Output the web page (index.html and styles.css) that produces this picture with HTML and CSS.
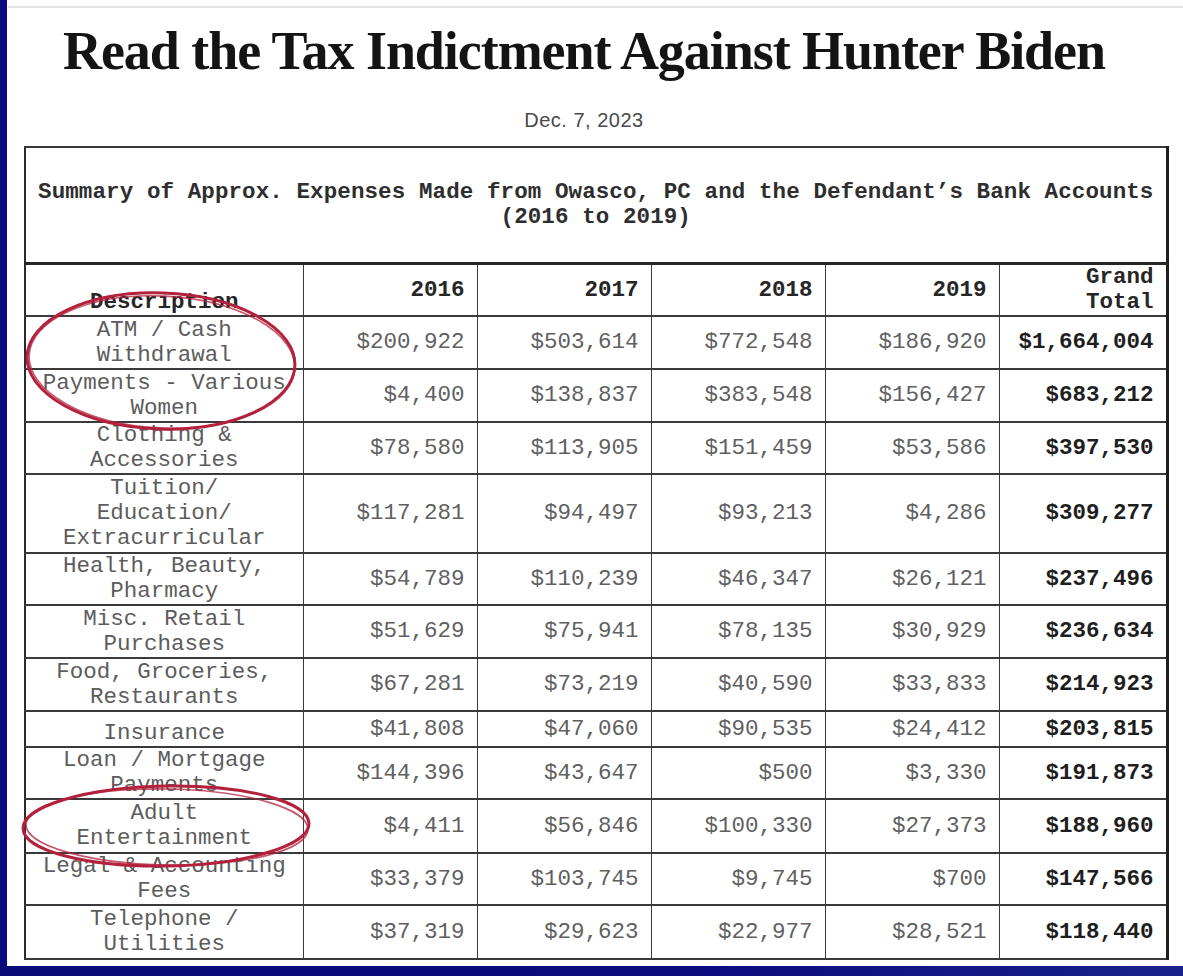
FILE: index.html
```html
<!DOCTYPE html>
<html lang="en">
<head>
<meta charset="utf-8">
<title>Read the Tax Indictment Against Hunter Biden</title>
<link rel="stylesheet" href="styles.css">
</head>
<body>
<div class="screen">
  <main class="page">
    <div class="rule"></div>
    <h1 class="headline">Read the Tax Indictment Against Hunter Biden</h1>
    <p class="dateline">Dec. 7, 2023</p>
    <div class="doc">
      <table class="expenses">
        <colgroup>
          <col class="c-desc"><col class="c-year"><col class="c-year"><col class="c-year"><col class="c-year"><col class="c-total">
        </colgroup>
        <tr class="r-title">
          <th colspan="6" class="title-cell">Summary of Approx. Expenses Made from Owasco, PC and the Defendant’s Bank Accounts<br>(2016 to 2019)</th>
        </tr>
        <tr class="r-head">
          <th class="h-desc">Description</th>
          <th class="h-num">2016</th>
          <th class="h-num">2017</th>
          <th class="h-num">2018</th>
          <th class="h-num">2019</th>
          <th class="h-num">Grand<br>Total</th>
        </tr>
        <tr class="r2a">
          <td class="desc">ATM / Cash<br>Withdrawal</td>
          <td class="num">$200,922</td><td class="num">$503,614</td><td class="num">$772,548</td><td class="num">$186,920</td><td class="tot">$1,664,004</td>
        </tr>
        <tr class="r2a">
          <td class="desc">Payments - Various<br>Women</td>
          <td class="num">$4,400</td><td class="num">$138,837</td><td class="num">$383,548</td><td class="num">$156,427</td><td class="tot">$683,212</td>
        </tr>
        <tr class="r2b">
          <td class="desc">Clothing &amp;<br>Accessories</td>
          <td class="num">$78,580</td><td class="num">$113,905</td><td class="num">$151,459</td><td class="num">$53,586</td><td class="tot">$397,530</td>
        </tr>
        <tr class="r3">
          <td class="desc">Tuition/<br>Education/<br>Extracurricular</td>
          <td class="num">$117,281</td><td class="num">$94,497</td><td class="num">$93,213</td><td class="num">$4,286</td><td class="tot">$309,277</td>
        </tr>
        <tr class="r2b">
          <td class="desc">Health, Beauty,<br>Pharmacy</td>
          <td class="num">$54,789</td><td class="num">$110,239</td><td class="num">$46,347</td><td class="num">$26,121</td><td class="tot">$237,496</td>
        </tr>
        <tr class="r2a">
          <td class="desc">Misc. Retail<br>Purchases</td>
          <td class="num">$51,629</td><td class="num">$75,941</td><td class="num">$78,135</td><td class="num">$30,929</td><td class="tot">$236,634</td>
        </tr>
        <tr class="r2a">
          <td class="desc">Food, Groceries,<br>Restaurants</td>
          <td class="num">$67,281</td><td class="num">$73,219</td><td class="num">$40,590</td><td class="num">$33,833</td><td class="tot">$214,923</td>
        </tr>
        <tr class="r1">
          <td class="desc desc-low">Insurance</td>
          <td class="num">$41,808</td><td class="num">$47,060</td><td class="num">$90,535</td><td class="num">$24,412</td><td class="tot">$203,815</td>
        </tr>
        <tr class="r2b">
          <td class="desc">Loan / Mortgage<br>Payments</td>
          <td class="num">$144,396</td><td class="num">$43,647</td><td class="num">$500</td><td class="num">$3,330</td><td class="tot">$191,873</td>
        </tr>
        <tr class="r2c">
          <td class="desc">Adult<br>Entertainment</td>
          <td class="num">$4,411</td><td class="num">$56,846</td><td class="num">$100,330</td><td class="num">$27,373</td><td class="tot">$188,960</td>
        </tr>
        <tr class="r2b">
          <td class="desc">Legal &amp; Accounting<br>Fees</td>
          <td class="num">$33,379</td><td class="num">$103,745</td><td class="num">$9,745</td><td class="num">$700</td><td class="tot">$147,566</td>
        </tr>
        <tr class="r2c">
          <td class="desc">Telephone /<br>Utilities</td>
          <td class="num">$37,319</td><td class="num">$29,623</td><td class="num">$22,977</td><td class="num">$28,521</td><td class="tot">$118,440</td>
        </tr>
      </table>
      <svg class="marks" width="1142" height="812" viewBox="0 0 1142 812" aria-hidden="true">
        <g fill="none" stroke="#b3223c" stroke-linecap="round">
          <ellipse cx="137" cy="215" rx="134" ry="68" stroke-width="3" transform="rotate(2 137 215)"/>
          <ellipse cx="138" cy="216" rx="133" ry="66" stroke-width="1.6" stroke-opacity="0.75" transform="rotate(3 138 216)"/>
          <ellipse cx="142" cy="680" rx="143" ry="40" stroke-width="3" transform="rotate(-1 142 680)"/>
          <ellipse cx="143" cy="681" rx="141" ry="38" stroke-width="1.6" stroke-opacity="0.75" transform="rotate(1 143 681)"/>
        </g>
      </svg>
    </div>
  </main>
  <div class="bottom-bar"></div>
</div>
</body>
</html>
```
FILE: styles.css
```css
html, body {
  margin: 0;
  padding: 0;
  background: #ffffff;
}

.screen {
  width: 1183px;
  height: 976px;
  overflow: hidden;
  display: flex;
  flex-direction: column;
}

.page {
  height: 966px;
  flex: none;
  box-sizing: border-box;
  border-left: 7px solid #0b0b80;
  padding-top: 6px;
  overflow: hidden;
  background: #fff;
}

.bottom-bar {
  height: 10px;
  flex: none;
  background: linear-gradient(90deg, #0a0a78 0%, #0c0c80 60%, #17238a 100%);
}

.rule {
  height: 2px;
  margin-left: 1px;
  background: #e4e4e4;
}

.headline {
  margin: 13px 0 0;
  padding-right: 22px;
  text-align: center;
  font-family: "Liberation Serif", "Times New Roman", serif;
  font-weight: bold;
  font-size: 54px;
  line-height: 60px;
  letter-spacing: -1.05px;
  color: #141414;
}

.dateline {
  margin: 27px 0 0;
  padding-right: 22px;
  text-align: center;
  font-family: "Liberation Sans", Arial, sans-serif;
  font-size: 20px;
  line-height: 24px;
  letter-spacing: 0.5px;
  color: #4a4a4a;
}

.doc {
  position: relative;
  margin: 14px 0 0 17px;
  width: 1142px;
}

.expenses {
  width: 1142px;
  table-layout: fixed;
  border-collapse: collapse;
  font-family: "Liberation Mono", "Courier New", monospace;
  font-size: 22.5px;
  line-height: 25px;
  color: #5a5a5a;
  border-top: 2px solid #2c2c2c;
  border-left: 2px solid #2c2c2c;
  border-right: 3px solid #1e1e1e;
  border-bottom: 2px solid #2c2c2c;
}

.c-desc { width: 278px; }
.c-year { width: 174px; }
.c-total { width: 168px; }

.expenses th,
.expenses td {
  padding: 0;
  border-left: 1px solid #3a3a3a;
  border-right: 1px solid #3a3a3a;
  border-top: 2px solid #3a3a3a;
  border-bottom: 2px solid #3a3a3a;
  overflow: hidden;
  white-space: nowrap;
}

.title-cell {
  height: 114px;
  text-align: center;
  vertical-align: middle;
  font-weight: bold;
  letter-spacing: 0.1px;
  color: #2e2e2e;
  padding-top: 2px;
}

.r-head th {
  height: 49px;
  font-weight: bold;
  color: #262626;
  border-top: 3px solid #262626;
}

.h-desc {
  text-align: center;
  vertical-align: bottom;
}

.h-num {
  text-align: right;
  vertical-align: middle;
  padding-right: 12px !important;
}

.r2a td { height: 51px; }
.r2b td { height: 50px; }
.r2c td { height: 52px; }
.r3 td { height: 77px; }
.r1 td { height: 34px; }

.desc {
  text-align: center;
  vertical-align: middle;
  color: #5c5c5c;
}

.desc-low {
  vertical-align: bottom;
}

.num {
  text-align: right;
  vertical-align: middle;
  padding-right: 12px !important;
  color: #606060;
}

.tot {
  text-align: right;
  vertical-align: middle;
  padding-right: 12px !important;
  font-weight: bold;
  color: #1e1e1e;
}

.marks {
  position: absolute;
  left: 0;
  top: 0;
  overflow: visible;
  pointer-events: none;
}
```
